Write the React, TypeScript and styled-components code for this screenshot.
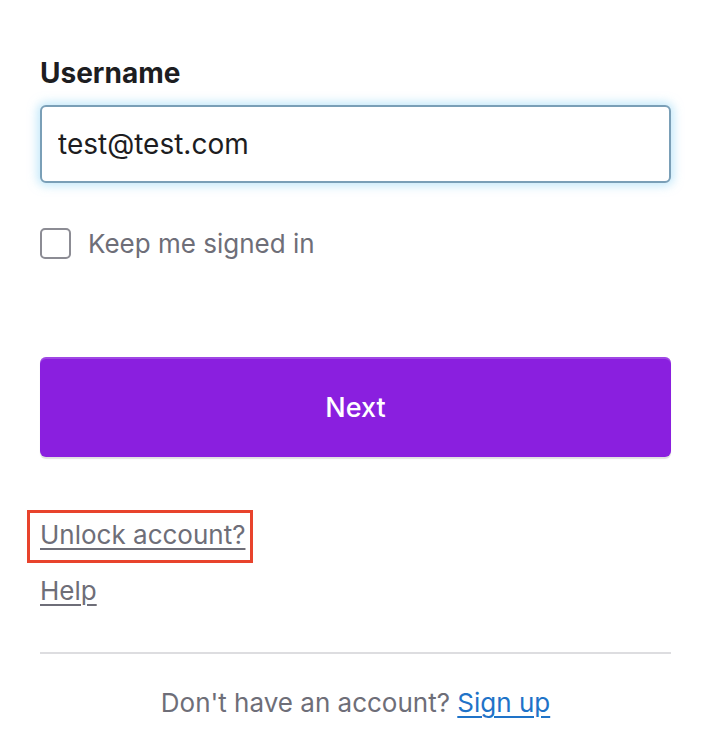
import React, { useEffect, useRef } from 'react'
import styled, { createGlobalStyle } from 'styled-components'

const GlobalStyle = createGlobalStyle`
  html, body {
    margin: 0;
    padding: 0;
    background: #ffffff;
  }
  body {
    font-family: Inter, "Noto Sans", "Liberation Sans", sans-serif;
    -webkit-font-smoothing: antialiased;
  }
`

const Form = styled.form`
  width: 631px;
  padding: 55px 0 0 40px;
  display: flex;
  flex-direction: column;
`

const Label = styled.label`
  font-size: 28px;
  line-height: 36px;
  font-weight: 700;
  color: #1d1d21;
`

const Input = styled.input`
  box-sizing: border-box;
  margin-top: 14px;
  width: 100%;
  height: 78px;
  padding: 0 16px;
  border: 2px solid #7a9fb7;
  border-radius: 6px;
  font-family: inherit;
  font-size: 28px;
  color: #1d1d21;
  caret-color: #1d1d21;
  box-shadow: 0 0 10px 3px rgba(150, 215, 245, 0.55);
  outline: none;
`

const CheckRow = styled.label`
  margin-top: 45px;
  display: flex;
  align-items: center;
  gap: 17px;
  font-size: 26px;
  color: #6e6e78;
`

const Box = styled.span`
  box-sizing: border-box;
  width: 31px;
  height: 31px;
  border: 2px solid #8c8c94;
  border-radius: 5px;
  background: #fff;
`

const Button = styled.button`
  margin-top: 98px;
  height: 100px;
  width: 100%;
  border: 0;
  border-radius: 6px;
  background: #8a1fdf;
  box-shadow: inset 0 2px 0 rgba(255, 255, 255, 0.18), 0 2px 1px rgba(0, 0, 0, 0.12);
  color: #ffffff;
  font-family: inherit;
  font-size: 27px;
  font-weight: 500;
  cursor: pointer;
`

const Links = styled.div`
  margin-top: 53px;
  display: flex;
  flex-direction: column;
  align-items: flex-start;
  gap: 10px;
`

const Highlight = styled.span`
  display: inline-block;
  margin-left: -13px;
  padding: 4px 5px 7px 10px;
  border: 3px solid #e8432c;
`

const Link = styled.a<{ $blue?: boolean }>`
  font-size: 26px;
  line-height: 36px;
  color: ${(p) => (p.$blue ? '#1f73c8' : '#6e6e78')};
  text-decoration: underline;
  text-decoration-thickness: 2px;
  text-underline-offset: 4px;
  cursor: pointer;
`

const Divider = styled.hr`
  margin: 43px 0 0;
  border: 0;
  border-top: 2px solid #dddde0;
`

const Footer = styled.p`
  margin: 31px 0 0;
  text-align: center;
  font-size: 26px;
  line-height: 36px;
  color: #6e6e78;
`

export default function App() {
  const inputRef = useRef<HTMLInputElement>(null)

  // put the caret after the typed address, as in a live form
  useEffect(() => {
    const el = inputRef.current
    if (!el) return
    el.focus()
    el.setSelectionRange(el.value.length, el.value.length)
  }, [])

  return (
    <>
      <GlobalStyle />
      <Form onSubmit={(e) => e.preventDefault()}>
        <Label htmlFor="username">Username</Label>
        <Input id="username" ref={inputRef} defaultValue="test@test.com" />
        <CheckRow>
          <Box />
          Keep me signed in
        </CheckRow>
        <Button type="submit">Next</Button>
        <Links>
          <Highlight>
            <Link>Unlock account?</Link>
          </Highlight>
          <Link>Help</Link>
        </Links>
        <Divider />
        <Footer>
          Don't have an account? <Link $blue>Sign up</Link>
        </Footer>
      </Form>
    </>
  )
}
